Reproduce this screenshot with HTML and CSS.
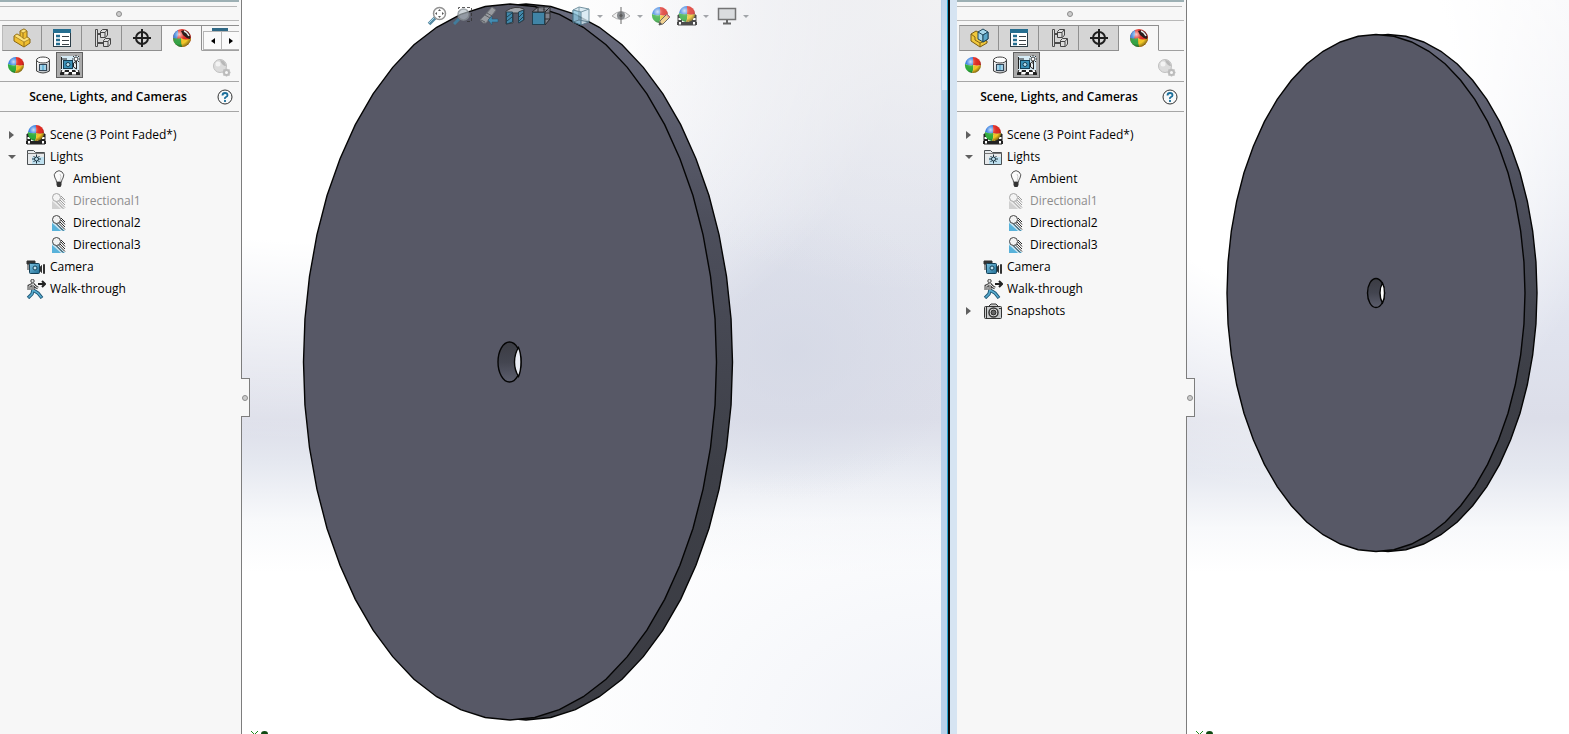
FILE: index.html
```html
<!DOCTYPE html>
<html lang="en">
<head>
<meta charset="utf-8">
<title>Scene, Lights, and Cameras</title>
<link rel="stylesheet" href="styles.css">
</head>
<body>
<svg class="defs" aria-hidden="true">
  <defs>
    <linearGradient id="rim" x1="0" y1="0" x2="0" y2="1">
      <stop offset="0" stop-color="#6a6c7e"/><stop offset=".3" stop-color="#4d4f5c"/><stop offset=".65" stop-color="#3d3f47"/><stop offset="1" stop-color="#3b3c43"/>
    </linearGradient>
    <linearGradient id="bore" x1="0" y1="0" x2="0" y2="1">
      <stop offset="0" stop-color="#3b3c43"/><stop offset=".5" stop-color="#434550"/><stop offset="1" stop-color="#5c5e6d"/>
    </linearGradient>
    <linearGradient id="steel" x1="0" y1="0" x2="1" y2="1">
      <stop offset="0" stop-color="#fff"/><stop offset="1" stop-color="#a9afb4"/>
    </linearGradient>
    <linearGradient id="blue" x1="0" y1="0" x2="1" y2="1">
      <stop offset="0" stop-color="#7cc3e2"/><stop offset="1" stop-color="#1f6d94"/>
    </linearGradient>
    <radialGradient id="gloss" cx=".35" cy=".3" r=".75">
      <stop offset="0" stop-color="#fff" stop-opacity=".75"/><stop offset=".35" stop-color="#fff" stop-opacity=".1"/><stop offset=".7" stop-color="#000" stop-opacity="0"/><stop offset="1" stop-color="#000" stop-opacity=".5"/>
    </radialGradient>
    <polygon id="facets" points="1000,0 993,120 971,239 935,355 886,465 823,568 749,663 663,749 568,823 465,886 355,935 239,971 120,993 0,1000 -120,993 -239,971 -355,935 -465,886 -568,823 -663,749 -749,663 -823,568 -886,465 -935,355 -971,239 -993,120 -1000,0 -993,-120 -971,-239 -935,-355 -886,-465 -823,-568 -749,-663 -663,-749 -568,-823 -465,-886 -355,-935 -239,-971 -120,-993 0,-1000 120,-993 239,-971 355,-935 465,-886 568,-823 663,-749 749,-663 823,-568 886,-465 935,-355 971,-239 993,-120" vector-effect="non-scaling-stroke"/>

    <symbol id="ball" viewBox="0 0 18 18">
      <path d="M9 9V1A8 8 0 0 0 1 8Q5 10 9 9Z" fill="#2f7be0"/>
      <path d="M9 9V1A8 8 0 0 1 17 9Q13 10.500 9 9Z" fill="#e02a22"/>
      <path d="M9 9Q5 10 1 8A8 8 0 0 0 8 17Q10 13 9 9Z" fill="#2fae3b"/>
      <path d="M9 9Q13 10.500 17 9A8 8 0 0 1 8 17Q10 13 9 9Z" fill="#f4c521"/>
      <circle cx="9" cy="9" r="8" fill="url(#gloss)"/>
    </symbol>
    <symbol id="render" viewBox="0 0 20 20">
      <circle cx="10" cy="10" r="9" fill="#e22b23"/>
      <path d="M1 10A9 9 0 0 1 6 2Q7 6 5 11Q3 11 1 10Z" fill="#3d86dc"/>
      <path d="M1 10Q5 11 9 10Q9 15 11 19A9 9 0 0 1 1 10Z" fill="#35a545"/>
      <path d="M9 10Q14 13 19 10A9 9 0 0 1 10 19Q9 15 9 10Z" fill="#f5c928"/>
      <circle cx="10" cy="10" r="9" fill="url(#gloss)"/>
      <path d="M9 3Q14 1 17 5Q19 8 18 11Q14 10 11 7Z" fill="#2a1d1d"/>
      <path d="M12 3Q15 4 17 8" fill="none" stroke="#e8e8e8" stroke-width="1.500"/>
    </symbol>
    <symbol id="part" viewBox="0 0 20 20">
      <path d="M2 8L5 6L8 8V3L12 1L15 3V9L18 11V15L12 19L2 13Z" fill="#f0bf30" stroke="#8a6710" stroke-linejoin="round"/>
      <path d="M2 8L5 6L9 8.500L12 11L15 9L18 11L12 14ZM8 3L12 1L15 3L11 5Z" fill="#fde27a" stroke="#94701a" stroke-width=".700"/>
      <path d="M11 5V10M12 14V19" fill="none" stroke="#94701a"/>
    </symbol>
    <symbol id="assembly" viewBox="0 0 20 20">
      <path d="M2 6L7 3L11 5V12L18 13V15L11 19L2 13Z" fill="#f0c83c" stroke="#7a5c10" stroke-linejoin="round"/>
      <path d="M2 6L6 9V12L11 15L18 12M11 15V19" fill="none" stroke="#80621a"/>
      <path d="M9 4L14 1L19 4V11L14 14L9 11Z" fill="#a6d6ea" stroke="#20485c" stroke-linejoin="round"/>
      <path d="M9 4L14 7L19 4M14 7V14" fill="none" stroke="#20485c"/>
      <path d="M14 7L19 4V11L14 14Z" fill="#5ba6c8" stroke="#20485c"/>
    </symbol>
    <symbol id="props" viewBox="0 0 20 20">
      <rect x="1.500" y="1.500" width="17" height="17" fill="#fff" stroke="#2c3e48"/>
      <rect x="1" y="1" width="18" height="4" fill="#256e90"/>
      <path d="M4 8H8M4 12H8M4 16H8" stroke="#256e90" stroke-width="2.500"/>
      <path d="M10 8.500H17M10 12.500H17M10 16.500H17" stroke="#3c4347"/>
    </symbol>
    <symbol id="config" viewBox="0 0 20 20">
      <path d="M4 6H9M4 15H12" stroke="#4c4c4c" stroke-width="2" fill="none"/>
      <path d="M3.500 1.500H5.500V18.500H3.500Z" fill="#ddd" stroke="#4c4c4c"/>
      <path d="M8.500 3.500L10.500 1.500H15.500V7L13.500 9.500H8.500ZM11.500 12.500L13.500 10.500H18.500V16L16.500 18.500H11.500Z" fill="#ddd" stroke="#444"/>
      <path d="M8.500 4.500H13V9M13 4.500L15 2M11.500 13.500H16V18M16 13.500L18 11" fill="none" stroke="#444"/>
    </symbol>
    <symbol id="target" viewBox="0 0 20 20">
      <circle cx="10" cy="10" r="6" fill="none" stroke="#1e1e1e" stroke-width="2"/>
      <path d="M10 1V19M1 10H19" stroke="#1e1e1e" stroke-width="2"/>
    </symbol>
    <symbol id="decal" viewBox="0 0 18 18">
      <path d="M2.500 4V15Q9 19 15.500 15V4" fill="url(#steel)" stroke="#444"/>
      <ellipse cx="9" cy="4" rx="6.500" ry="3" fill="#fff" stroke="#444"/>
      <rect x="5.500" y="8.500" width="7" height="6" fill="#6db6d8" stroke="#345"/>
      <path d="M7 9V14M11 9V14" stroke="#d8edf6"/>
    </symbol>
    <symbol id="checks" viewBox="0 0 20 8">
      <path d="M3 0H17L20 8H0Z" fill="#fff" stroke="#222"/>
      <path d="M3 0H6L5 2.500H2ZM9 0H12V2.500H9ZM15 0H17L18 2.500H15ZM5 2.500H9V5H4.500ZM12 2.500H15L16 5H12ZM1 5H4.500L4 8H0ZM9 5H12V8H8ZM16 5H19L20 8H16Z" fill="#222"/>
    </symbol>
    <symbol id="scene" viewBox="0 0 20 20">
      <path d="M1 9H19V19H1Z" fill="#fff" stroke="#222"/>
      <path d="M1 9H4V12H1ZM16 9H19V12H16ZM4 12H7V14H4ZM13 12H16V14H13ZM1 14H5V16H1ZM8 16H12V14H15V16H19V14H15V16H12V19H8ZM4 16H8V19H4ZM12 16H16V19H12ZM0 16H2V19H0ZM18 16H20V19H18Z" fill="#222"/>
      <use href="#ball" x="1" y="-1" width="18" height="18"/>
    </symbol>
    <symbol id="scenecam" viewBox="0 0 20 20">
      <use href="#checks" x="0" y="12" width="20" height="8"/>
      <path d="M1 1H19V15H1Z" fill="#d6ebf5"/>
      <rect x="3.500" y="5.500" width="9" height="8" fill="#3991b8" stroke="#143e54"/>
      <path d="M1.500 2V14M1 4H7M13.500 8L16.500 6V14L13.500 12Z" fill="#e9eef0" stroke="#222"/>
      <circle cx="8" cy="9.500" r="2" fill="#b9e0f0" stroke="#143e54"/>
      <circle cx="16" cy="4" r="2" fill="#fff" stroke="#333"/>
      <path d="M16 0V1M16 7V9M12 4H13M19 4H20M13 1L14 2M18 6L19 7M19 1L18 2" stroke="#333"/>
    </symbol>
    <symbol id="ghost" viewBox="0 0 20 20">
      <circle cx="8" cy="8" r="6.500" fill="#dcdcdc" stroke="#c0c0c0"/>
      <path d="M8 2Q13 2 14 8Q10 8 8 2Z" fill="#b8b8b8"/><circle cx="6" cy="6" r="2.500" fill="#f3f3f3"/>
      <circle cx="14.500" cy="14.500" r="2.500" fill="none" stroke="#bcbcbc" stroke-width="2"/>
      <path d="M14.500 10.500V12M14.500 17V18.500M10.500 14.500H12M17 14.500H18.500M11.500 11.500L12.500 12.500M16.500 16.500L17.500 17.500M17.500 11.500L16.500 12.500M11.500 17.500L12.500 16.500" stroke="#bcbcbc" stroke-width="1.500"/>
    </symbol>
    <symbol id="folder" viewBox="0 0 20 20">
      <path d="M1.500 17.500V3.500H7.500L9.500 5.500H18.500V17.500Z" fill="#e6e9eb" stroke="#4a4f52"/>
      <path d="M1.500 6.500H18.500" stroke="#777"/>
      <path d="M6 10H18V17H6Z" fill="#bfe0ef"/>
      <circle cx="10.500" cy="12" r="2" fill="none" stroke="#17313f"/>
      <path d="M10.500 7.500V10M10.500 14V16.500M6 12H8.500M12.500 12H15M7.500 9L9 10.500M12 13.500L13.500 15M13.500 9L12 10.500M7.500 15L9 13.500" stroke="#17313f"/>
    </symbol>
    <symbol id="bulb" viewBox="0 0 16 18">
      <path d="M5.500 12Q5.500 10 4 8A4.700 4.700 0 1 1 12 8Q10.500 10 10.500 12Z" fill="#fafafa" stroke="#555"/>
      <path d="M5.500 12H10.500V15L9.500 17H6.500L5.500 15Z" fill="#333"/>
      <path d="M9 4Q11 6 9 11" fill="none" stroke="#ccc"/>
    </symbol>
    <symbol id="beam" viewBox="0 0 16 18">
      <path d="M1 5L14 17H1Z" fill="#58b2da"/><path d="M1 4L4 8L12 17H10L1 9Z" fill="#c7e4f1"/>
      <path d="M10 4L14 8M10 6L14 10.500M9 8L14 13M7.500 9L14 15.500M5 9.500L12 16.500" stroke="#2b2b2b"/>
      <circle cx="5.500" cy="5.500" r="4" fill="#f2f2f2" stroke="#444"/>
    </symbol>
    <symbol id="camera" viewBox="0 0 20 18">
      <path d="M1 3H9V6H1ZM2 5V12" fill="#333" stroke="#333"/>
      <rect x="3.500" y="5.500" width="10" height="10" rx="1" fill="url(#blue)" stroke="#123f56"/>
      <path d="M14.500 8.500L15.500 7.500V14.500L14.500 13.500ZM17.500 6.500H18.500V15.500H17.500Z" fill="#ddd" stroke="#333"/>
      <circle cx="9" cy="10" r="2" fill="#c2e4f1" stroke="#123f56"/>
    </symbol>
    <symbol id="walk" viewBox="0 0 20 20">
      <path d="M7 11L12 14L16 19" fill="none" stroke="#1c5574" stroke-width="3.400"/>
      <path d="M7 11L6 15L2 19" fill="none" stroke="#1c5574" stroke-width="3.400"/>
      <path d="M7 11L12 14L15.500 18.500M7 11L6 15L2.500 18.500" fill="none" stroke="#59add0" stroke-width="1.500"/>
      <path d="M7 4V11M7 5L3 7V11M7 5L10 8L12 9" fill="none" stroke="#444" stroke-width="3"/>
      <path d="M7 4V11M7 5L3 7V11M7 5L10 8L12 9" fill="none" stroke="#ddd"/>
      <circle cx="6.500" cy="2" r="1.700" fill="#ddd" stroke="#444"/>
      <path d="M12 5H18M16 2L19 5L16 8" fill="none" stroke="#222" stroke-width="2"/>
    </symbol>
    <symbol id="snap" viewBox="0 0 20 18">
      <path d="M6 4L8 2H13L15 4" fill="#ccc" stroke="#333"/>
      <rect x="1.500" y="4.500" width="17" height="12" rx="1" fill="#c9cbcc" stroke="#333"/>
      <path d="M3.500 5V16" stroke="#333"/>
      <circle cx="10.500" cy="10.500" r="4.500" fill="#eee" stroke="#333" stroke-width="1.500"/>
      <circle cx="10.500" cy="10.500" r="2.500" fill="#666" stroke="#222"/>
      <path d="M16 6.500H18" stroke="#333"/>
    </symbol>
    <symbol id="help" viewBox="0 0 16 16">
      <circle cx="8" cy="8" r="7" fill="#f7f9fa" stroke="#333"/>
      <path d="M5.500 6.500Q5.500 4 8 4T10.500 6.300Q10.500 7.300 9 8T8 10M8 11V13" fill="none" stroke="#1b6f9b" stroke-width="1.800"/>
    </symbol>
    <symbol id="zoomfit" viewBox="0 0 20 20">
      <path d="M2 18L8 12" stroke="#2c6c8b" stroke-width="3.500"/><path d="M2 17L7 12" stroke="#8fcbe2"/>
      <circle cx="12.500" cy="7.500" r="6" fill="#fff" stroke="#777" stroke-width="1.500"/>
      <path d="M12.500 3L14 5H11ZM12.500 12L14 10H11ZM8 7.500L10 6V9ZM17 7.500L15 6V9Z" fill="#333"/>
    </symbol>
    <symbol id="zoomarea" viewBox="0 0 20 20">
      <path d="M5.500 8V1.500H18.500V15.500H14" fill="none" stroke="#333" stroke-dasharray="3 2"/>
      <path d="M1 18L6 13" stroke="#3c86aa" stroke-width="3"/>
      <circle cx="10.500" cy="8.500" r="5.500" fill="#b5c0c8" fill-opacity=".8" stroke="#8a9297" stroke-width="1.500"/>
    </symbol>
    <symbol id="prev" viewBox="0 0 20 20">
      <path d="M1 14L6 9L13 1L17 4L11 12L7 17H4Z" fill="#a9acaf" stroke="#707478"/>
      <path d="M6 9L11 12M2 14L6 16M8 7L13 10" stroke="#5c6064"/>
      <path d="M9 14L13 10V13H19V16H13V19Z" fill="#3f9bc6" stroke="#1d4e68" stroke-width=".500"/>
    </symbol>
    <symbol id="section" viewBox="0 0 20 20">
      <path d="M1 5Q10 -1 19 3V14L14 17V7H8V17L1 18Z" fill="#b4b8bb" stroke="#333"/>
      <path d="M1.500 6H7.500V16L1.500 18ZM13.500 6L18.500 4V14L13.500 17Z" fill="#3b95bd" stroke="#173c4e"/>
      <path d="M2 11L7 7M2 15L7 11M14 11L18 7M14 15L18 11" stroke="#173c4e"/>
    </symbol>
    <symbol id="views" viewBox="0 0 20 20">
      <path d="M1 6L7 1H19V13L14 19V6Z" fill="#8b8e97" stroke="#222"/>
      <path d="M7 1V6M7 7H19M13 1V7M14 6L19 1M14 13H19" stroke="#222"/>
      <rect x="1.500" y="6.500" width="12" height="12" fill="#3b8fb6" stroke="#15394a"/>
    </symbol>
    <symbol id="cube" viewBox="0 0 20 20">
      <path d="M2 4L8 1L18 3V16L10 19L2 16Z" fill="#d4e9f2" stroke="#53788a"/>
      <path d="M2 4L10 6V19L2 16Z" fill="#8cc5de" stroke="#3d6a80"/>
      <path d="M10 6L18 3M8 1V14L2 16M8 14L18 16" fill="none" stroke="#5d8293"/>
    </symbol>
    <symbol id="eye" viewBox="0 0 20 20">
      <path d="M1 10Q10 1 19 10Q10 17 1 10Z" fill="#eee" stroke="#999"/>
      <circle cx="10" cy="9.500" r="4" fill="#6b6f73"/><circle cx="10" cy="9.500" r="1.500" fill="#222"/>
      <path d="M10 1V18" stroke="#444"/>
    </symbol>
    <symbol id="appear" viewBox="0 0 20 20">
      <use href="#ball" x="0" y="0" width="18" height="18"/>
      <path d="M8 19L9 15L16 8L19 11L12 18Z" fill="#f0c878" stroke="#444"/><path d="M16 8L19 11L18 12L15 9Z" fill="#d66"/><path d="M8 19L9 16L11 18Z" fill="#222"/>
    </symbol>
    <symbol id="monitor" viewBox="0 0 20 20">
      <rect x="1.500" y="2.500" width="17" height="11" fill="#d4d7da" stroke="#555" stroke-width="1.500"/>
      <path d="M10 14V17M6 17.500H14" stroke="#444" stroke-width="2"/>
    </symbol>
    <symbol id="triad" viewBox="0 0 18 3">
      <path d="M0 0L3 3M7 0L4 3" stroke="#1d8a1d"/><path d="M10 3Q10 0 13.500 0T17 3Z" fill="#0f4a12"/>
    </symbol>
  </defs>
</svg>

<main class="workspace">
  <aside class="panel">
    <div class="grip"><span class="dot"></span></div>
    <div class="tabs" role="tablist">
      <button class="tab" role="tab" aria-label="Feature tree"><svg class="ico"><use href="#part"/></svg></button>
      <button class="tab" role="tab" aria-label="Properties"><svg class="ico"><use href="#props"/></svg></button>
      <button class="tab" role="tab" aria-label="Configurations"><svg class="ico"><use href="#config"/></svg></button>
      <button class="tab" role="tab" aria-label="Dimensions"><svg class="ico"><use href="#target"/></svg></button>
      <button class="tab active" role="tab" aria-selected="true" aria-label="Display"><svg class="ico"><use href="#render"/></svg></button>
      <div class="scroller">
        <span class="peek"></span>
        <button class="scroll" aria-label="Scroll left"><i class="tri left"></i></button><button class="scroll" aria-label="Scroll right"><i class="tri right"></i></button>
      </div>
    </div>
    <div class="modes">
      <button class="mode" aria-label="Appearances"><svg class="ico18"><use href="#ball"/></svg></button>
      <button class="mode" aria-label="Decals"><svg class="ico18"><use href="#decal"/></svg></button>
      <button class="mode on" aria-pressed="true" aria-label="Scene, lights and cameras"><svg class="ico"><use href="#scenecam"/></svg></button>
      <button class="mode last" disabled aria-label="Render options"><svg class="ico"><use href="#ghost"/></svg></button>
    </div>
    <header class="heading"><h2>Scene, Lights, and Cameras</h2><button class="help" aria-label="Help"><svg class="ico16"><use href="#help"/></svg></button></header>
    <ul class="tree">
      <li class="row"><button class="twist" aria-label="Expand Scene"><i class="tri closed"></i></button><svg class="ico"><use href="#scene"/></svg><span>Scene (3 Point Faded*)</span></li>
      <li><div class="row"><button class="twist" aria-label="Collapse Lights"><i class="tri open"></i></button><svg class="ico"><use href="#folder"/></svg><span>Lights</span></div>
        <ul class="branch">
          <li class="row"><svg class="small"><use href="#bulb"/></svg><span>Ambient</span></li>
          <li class="row off"><svg class="small"><use href="#beam"/></svg><span>Directional1</span></li>
          <li class="row"><svg class="small"><use href="#beam"/></svg><span>Directional2</span></li>
          <li class="row"><svg class="small"><use href="#beam"/></svg><span>Directional3</span></li>
        </ul>
      </li>
      <li class="row leaf"><svg class="ico"><use href="#camera"/></svg><span>Camera</span></li>
      <li class="row leaf"><svg class="ico"><use href="#walk"/></svg><span>Walk-through</span></li>
    </ul>
    <button class="handle" aria-label="Collapse panel"><span class="dot"></span></button>
  </aside>

  <section class="view view-a">
    <svg class="model" viewBox="0 0 699 734">
      <g stroke="#050505" stroke-width="1.400">
        <use href="#facets" transform="translate(284 362) scale(.2065 .358)" fill="url(#rim)"/>
        <use href="#facets" transform="translate(268 362) scale(.2065 .358)" fill="#575866"/>
        <ellipse cx="267.500" cy="362" rx="11.500" ry="20" fill="url(#bore)"/>
        <path d="M276.500 347.500Q272.500 354 272.500 362T276.500 376.500Q279 371 279 362T276.500 347.500Z" fill="#e9ecf4"/>
      </g>
      <use href="#triad" x="9" y="731" width="18" height="3"/>
    </svg>
    <nav class="hud" aria-label="View tools">
      <button aria-label="Zoom to fit"><svg class="ico"><use href="#zoomfit"/></svg></button>
      <button aria-label="Zoom to area"><svg class="ico"><use href="#zoomarea"/></svg></button>
      <button aria-label="Previous view"><svg class="ico"><use href="#prev"/></svg></button>
      <button aria-label="Section view"><svg class="ico"><use href="#section"/></svg></button>
      <button aria-label="View orientation"><svg class="ico"><use href="#views"/></svg></button>
      <button class="more" aria-label="View orientation options"></button>
      <button aria-label="Display style"><svg class="ico"><use href="#cube"/></svg></button>
      <button class="more" aria-label="Display style options"><i class="tri down"></i></button>
      <button aria-label="Hide and show items"><svg class="ico"><use href="#eye"/></svg></button>
      <button class="more" aria-label="Hide and show options"><i class="tri down"></i></button>
      <button aria-label="Edit appearance"><svg class="ico"><use href="#appear"/></svg></button>
      <button aria-label="Apply scene"><svg class="ico"><use href="#scene"/></svg></button>
      <button class="more" aria-label="Scene options"><i class="tri down"></i></button>
      <button aria-label="View settings"><svg class="ico"><use href="#monitor"/></svg></button>
      <button class="more" aria-label="View settings options"><i class="tri down"></i></button>
    </nav>
  </section>

  <div class="frame"></div>

  <aside class="panel">
    <div class="grip"><span class="dot"></span></div>
    <div class="tabs" role="tablist">
      <button class="tab" role="tab" aria-label="Feature tree"><svg class="ico"><use href="#assembly"/></svg></button>
      <button class="tab" role="tab" aria-label="Properties"><svg class="ico"><use href="#props"/></svg></button>
      <button class="tab" role="tab" aria-label="Configurations"><svg class="ico"><use href="#config"/></svg></button>
      <button class="tab" role="tab" aria-label="Dimensions"><svg class="ico"><use href="#target"/></svg></button>
      <button class="tab active" role="tab" aria-selected="true" aria-label="Display"><svg class="ico"><use href="#render"/></svg></button>
      <span class="rest"></span>
    </div>
    <div class="modes">
      <button class="mode" aria-label="Appearances"><svg class="ico18"><use href="#ball"/></svg></button>
      <button class="mode" aria-label="Decals"><svg class="ico18"><use href="#decal"/></svg></button>
      <button class="mode on" aria-pressed="true" aria-label="Scene, lights and cameras"><svg class="ico"><use href="#scenecam"/></svg></button>
      <button class="mode last" disabled aria-label="Render options"><svg class="ico"><use href="#ghost"/></svg></button>
    </div>
    <header class="heading"><h2>Scene, Lights, and Cameras</h2><button class="help" aria-label="Help"><svg class="ico16"><use href="#help"/></svg></button></header>
    <ul class="tree">
      <li class="row"><button class="twist" aria-label="Expand Scene"><i class="tri closed"></i></button><svg class="ico"><use href="#scene"/></svg><span>Scene (3 Point Faded*)</span></li>
      <li><div class="row"><button class="twist" aria-label="Collapse Lights"><i class="tri open"></i></button><svg class="ico"><use href="#folder"/></svg><span>Lights</span></div>
        <ul class="branch">
          <li class="row"><svg class="small"><use href="#bulb"/></svg><span>Ambient</span></li>
          <li class="row off"><svg class="small"><use href="#beam"/></svg><span>Directional1</span></li>
          <li class="row"><svg class="small"><use href="#beam"/></svg><span>Directional2</span></li>
          <li class="row"><svg class="small"><use href="#beam"/></svg><span>Directional3</span></li>
        </ul>
      </li>
      <li class="row leaf"><svg class="ico"><use href="#camera"/></svg><span>Camera</span></li>
      <li class="row leaf"><svg class="ico"><use href="#walk"/></svg><span>Walk-through</span></li>
      <li class="row"><button class="twist" aria-label="Expand Snapshots"><i class="tri closed"></i></button><svg class="ico"><use href="#snap"/></svg><span>Snapshots</span></li>
    </ul>
    <button class="handle" aria-label="Collapse panel"><span class="dot"></span></button>
  </aside>

  <section class="view view-b">
    <svg class="model" viewBox="0 0 382 734">
      <g stroke="#050505" stroke-width="1.400">
        <use href="#facets" transform="translate(201 293) scale(.149 .2585)" fill="url(#rim)"/>
        <use href="#facets" transform="translate(189 293) scale(.149 .2585)" fill="#575866"/>
        <ellipse cx="189" cy="293" rx="8.500" ry="14.500" fill="url(#bore)"/>
        <path d="M195.500 283Q193 287 193 293T195.500 303Q197.500 299 197.500 293T195.500 283Z" fill="#fff"/>
      </g>
      <use href="#triad" x="9" y="731" width="18" height="3"/>
    </svg>
  </section>
</main>
</body>
</html>
```
FILE: styles.css
```css
* { box-sizing: border-box; }
body { margin: 0; font: 12px/22px "Open Sans", "Noto Sans", sans-serif; color: #000; background: #fff; }
button { margin: 0; padding: 0; border: 0; background: none; font: inherit; display: flex; align-items: center; justify-content: center; }
ul { list-style: none; margin: 0; padding: 0; }
svg { display: block; flex: none; }
.defs { position: absolute; width: 0; height: 0; }
.ico { width: 20px; height: 20px; }
.ico18 { width: 18px; height: 18px; }
.ico16 { width: 16px; height: 16px; }
.small { width: 16px; height: 18px; }

.workspace { display: grid; grid-template-columns: 242px 699fr 16px 230px 382fr; min-height: 100vh; overflow: hidden; }

/* side panels */
.panel { position: relative; z-index: 1; background: #f7f7f7; border-right: 1px solid #7d7d7d; padding-right: 2px; }
.grip { height: 21px; padding-right: 2px; border-top: 2px solid #9db0b4; border-bottom: 1px solid #b8b8b8; display: flex; flex-direction: column; align-items: center; }
.grip::before { content: ""; width: 100%; height: 4px; flex: none; border-bottom: 1px solid #b8b8b8; margin-bottom: 4px; }
.dot { width: 6px; height: 6px; flex: none; border: 1px solid #8c8c8c; border-radius: 50%; background: #ccc; }

.tabs { display: flex; height: 26px; margin: 4px 0 0 2px; }
.tab { width: 40px; background: #d5d5d5; border: 1px solid #8f8f8f; border-left-width: 0; }
.tab:first-child { border-left: 1px solid #bbb; }
.tab.active { background: #f7f7f7; border-bottom-color: #f7f7f7; }
.scroller { flex: 1; display: flex; align-items: flex-end; position: relative; border-top: 1px solid #8f8f8f; border-bottom: 1px solid #a0a0a0; padding-left: 1px; }
.scroll { flex: 1; height: 19px; background: #fafafa; border: 1px solid #b5b5b5; }
.scroll + .scroll { border-left: 0; border-right: 0; }
.peek { position: absolute; left: 10px; top: 2px; width: 16px; height: 3px; background: #2f6885; }
.rest { flex: 1; border-bottom: 1px solid #a0a0a0; }

.modes { display: flex; align-items: flex-start; height: 31px; padding: 1px 7px 0 2px; border-bottom: 1px solid #a6a6a6; }
.mode { width: 27px; height: 26px; }
.mode.on { background: #ababab; border: 1px solid #606060; }
.mode.last { margin-left: auto; width: 20px; align-items: flex-end; }

.heading { display: flex; align-items: center; height: 30px; padding-right: 5px; border-bottom: 1px solid #a6a6a6; }
.heading h2 { flex: 1; margin: 0; font-size: 12px; font-weight: 600; text-align: center; white-space: nowrap; }
.help { width: 18px; height: 18px; }

.tree { padding: 12px 0 0 4px; }
.row { display: flex; align-items: center; gap: 4px; height: 22px; white-space: nowrap; }
.twist { width: 18px; height: 22px; padding: 0 3px 1px 0; }
.leaf { padding-left: 22px; }
.branch { padding-left: 47px; }
.branch .row { gap: 6px; }
.off { color: #8c8c8c; }
.off svg { filter: grayscale(1); opacity: .45; }

.tri { width: 0; height: 0; border: 4px solid transparent; }
.closed { border-width: 4px 0 4px 5px; border-left-color: #606060; }
.open { border-width: 4px 4px 0; border-top-color: #606060; }
.left { border-width: 3px 4px 3px 0; border-right-color: #000; }
.right { border-width: 3px 0 3px 4px; border-left-color: #000; }
.down { border-width: 3px 3px 0; border-top-color: #8e9196; }

.handle { position: absolute; top: 54%; left: 100%; width: 9px; height: 39px; margin-top: -18px; background: #f7f7f7; border: 1px solid #7d7d7d; border-left: 0; }

/* graphics areas */
.view { position: relative; min-width: 0; }
.model { width: 100%; height: 100%; max-height: 100vh; }
.view-a {
  background:
    radial-gradient(ellipse 60% 40% at 100% 0%, #f1f1f3, rgba(241, 241, 243, 0)),
    radial-gradient(ellipse 85% 60% at 10% 0%, #fff 55%, rgba(255, 255, 255, 0)),
    radial-gradient(ellipse 24% 20% at 79% 48%, rgba(212, 216, 229, .8), rgba(212, 216, 229, 0)),
    radial-gradient(ellipse 60% 40% at 100% 100%, #f1f3f8, rgba(241, 243, 248, 0)),
    linear-gradient(180deg, #e2e5ee 0%, #dfe2ec 30%, #dcdee9 57%, #e5e8f0 63%, #f8f9fb 71%, #fff 78%);
}
.view-b {
  background:
    radial-gradient(ellipse 90% 55% at 25% 12%, #fff 50%, rgba(255, 255, 255, 0)),
    linear-gradient(180deg, #f8f8fa 0%, #eceef4 25%, #e0e3ee 45%, #dcdee9 57%, #e5e8f0 64%, #f8f9fb 72%, #fff 78%);
}
.hud { position: absolute; top: 4px; left: 0; right: 0; height: 24px; padding-right: 6px; display: flex; justify-content: center; opacity: .8; }
.hud button { width: 26px; height: 24px; flex: none; }
.hud .more { width: 12px; margin-right: 2px; }

.frame {
  background:
    linear-gradient(180deg, rgba(222, 235, 248, .2), #dbe9f7) 1px 0 / 5px 90px no-repeat,
    linear-gradient(90deg, #b9d1ea 6px, #27a5cf 6px, #27a5cf 7px, #0a0a0a 7px, #0a0a0a 9px, #d6e4f2 9px);
}
```
